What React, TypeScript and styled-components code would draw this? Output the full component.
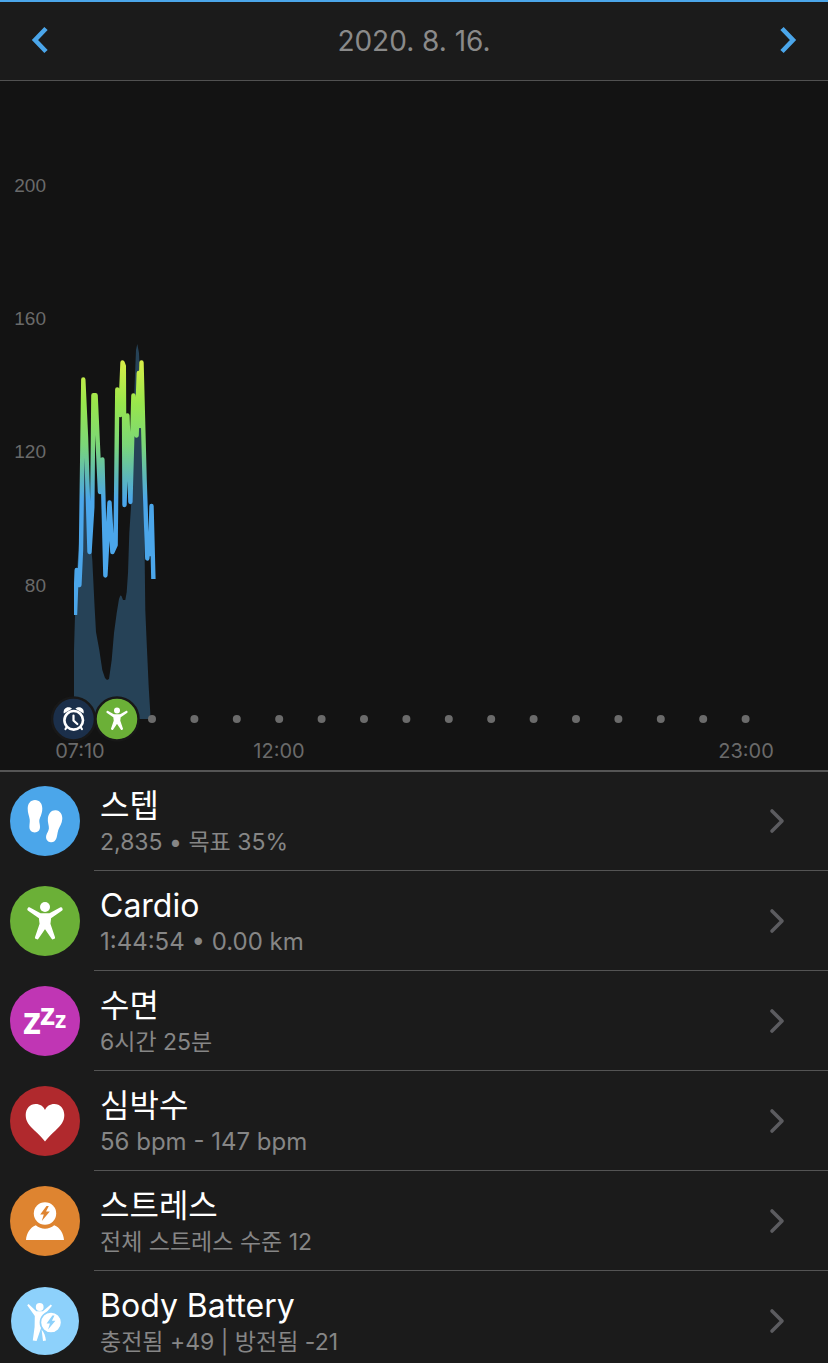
import React from "react";
import styled, { createGlobalStyle } from "styled-components";

const GlobalStyle = createGlobalStyle`
  * { box-sizing: border-box; }
  body {
    margin: 0;
    background: #1b1b1b;
    font-family: Inter, "Noto Sans CJK KR", sans-serif;
  }
`;

const Page = styled.div`
  display: flex;
  flex-direction: column;
  background: #1b1b1b;
`;

const Header = styled.header`
  display: flex;
  align-items: center;
  justify-content: space-between;
  height: 81px;
  padding: 0 20px;
  border-top: 2px solid #4ba6ea;
  border-bottom: 1px solid #515151;
`;

const DateTitle = styled.h1`
  margin: 0;
  color: #8a8a8a;
  font-size: 28px;
  font-weight: 400;
  line-height: 40px;
`;

const NavButton = styled.button`
  display: flex;
  padding: 0;
  border: 0;
  background: none;
  cursor: pointer;
`;

const ChartPanel = styled.section`
  background: #131313;
`;

const Chart = styled.svg`
  display: block;
  width: 100%;
  height: auto;
`;

const AxisLabel = styled.text`
  fill: #6a6a6a;
  font-family: "Liberation Sans", sans-serif;
  font-size: 19px;
  text-anchor: end;
`;

const TimeLabel = styled.text`
  fill: #6a6a6a;
  font-size: 20px;
  text-anchor: middle;
`;

const List = styled.ul`
  margin: 0;
  padding: 0;
  border-top: 2px solid #555555;
  list-style: none;
`;

const RowBody = styled.span`
  display: flex;
  flex: 1;
  align-items: center;
  justify-content: space-between;
  min-width: 0;
  padding: 15px 39px 12px 6px;
  border-top: 1px solid #545454;
`;

const RowLink = styled.a`
  display: flex;
  color: inherit;
  text-decoration: none;
`;

const Item = styled.li`
  &:first-child ${RowBody} {
    padding-top: 14px;
    border-top: 0;
  }
  &:first-child svg:first-child {
    margin-top: 14px;
  }
  &:last-child ${RowBody} {
    padding-bottom: 5px;
  }
`;

const Badge = styled.svg`
  flex: none;
  width: 70px;
  height: 70px;
  margin: 16px 14px 0 10px;
`;

const RowText = styled.span`
  display: flex;
  flex-direction: column;
`;

const Title = styled.span`
  color: #ffffff;
  font-size: 32px;
  line-height: 40px;
`;

const Detail = styled.span<{ $latin?: boolean }>`
  color: #868686;
  font-size: ${({ $latin }) => ($latin ? 24 : 23)}px;
  line-height: 32px;
`;

const Arrow = styled.svg`
  flex: none;
  width: 24px;
  height: 28px;
`;

const Zed = styled.text`
  fill: #ffffff;
  font-family: "Open Sans", sans-serif;
  font-weight: 700;
`;

const Figure = () => (
  <>
    <circle cx="35" cy="21" r="5" fill="#fff" />
    <path
      d="M18.9 22.4 L30 28.4 H40 L51.1 22.4 L51.5 23.4 L40 31.4 L39.2 38 L43.9 51.6 L42.6 52.2 L36.4 43 L35 41 L33.6 43 L27.4 52.2 L26.1 51.6 L30.8 38 L30 31.4 L18.5 23.4 Z"
      fill="#fff"
      stroke="#fff"
      strokeWidth="2.4"
      strokeLinejoin="round"
    />
  </>
);

const BOLT = "M1.5 -7.5 L-4.8 1 H-1.2 L-3.2 7.5 L4.8 -2 H1 L3.8 -7.5 Z";

const StepsIcon = () => (
  <g fill="#fff">
    <path d="M25 14 C29.5 14 32.3 17.5 32.3 22.5 C32.3 28.5 29.3 32 29.3 35 C29.3 37 30 38.5 30 41 C30 44.5 27.8 46.4 24.8 46.4 C21.5 46.4 19.4 44.2 19.4 41 C19.4 38 20 36 19.7 33.5 C19.2 29.5 17.6 27 17.7 22.5 C17.8 17.5 20.6 14 25 14 Z" />
    <path d="M45.8 24.2 C50 24.6 52.6 28.2 52.3 33 C52 37.5 49.5 40.5 48.3 44 C47.3 47 47.4 49.5 46.5 52 C45.4 55.3 42.8 57 39.8 56.1 C36.7 55.2 35.5 52.5 36.3 49.3 C37 46.8 38.6 45 38.9 42.5 C39.2 39.5 37.3 36.5 37.9 32 C38.5 27.3 41.5 23.8 45.8 24.2 Z" />
  </g>
);

const SleepIcon = () => (
  <>
    <Zed x="13" y="48" fontSize="37">z</Zed>
    <Zed x="30" y="39" fontSize="31">z</Zed>
    <Zed x="45" y="42" fontSize="23">z</Zed>
  </>
);

const HeartIcon = () => (
  <path
    d="M35 55.6 C33 52.5 29 48.8 24.5 44.5 C19 39.2 15.7 35.5 15.7 29 C15.7 22.5 20 18 25.7 18 C30 18 33.5 20.3 35 24 C36.5 20.3 40 18 44.3 18 C50 18 54.3 22.5 54.3 29 C54.3 35.5 51 39.2 45.5 44.5 C41 48.8 37 52.5 35 55.6 Z"
    fill="#fff"
  />
);

const StressIcon = () => (
  <>
    <circle cx="35" cy="27.5" r="11.2" fill="#fff" />
    <path d={BOLT} transform="translate(35 27.5)" fill="#de8430" />
    <path d="M16 54 C16.5 47.5 20 41.5 25.8 39.3 C31 43.9 39 43.9 44.2 39.3 C50 41.5 53.5 47.5 54 54 Z" fill="#fff" />
  </>
);

const BatteryIcon = () => (
  <>
    <circle cx="29.7" cy="21" r="3.9" fill="#fff" />
    <path
      d="M17.2 19.2 L18.6 17.9 L26.3 25.2 H32.8 L40.8 18.4 L42 19.8 L34.3 29 L32.8 42 L31.2 41.5 L26.6 55 L22.8 54.4 L24.6 41 L24.8 30 Z"
      fill="#fff"
    />
    <path d="M31.6 43.5 C34.2 46.5 35.4 50.5 36 54.4 L33 55 Z" fill="#fff" />
    <circle cx="41" cy="36.5" r="10.6" fill="#fff" stroke="#8dd1fb" strokeWidth="1.6" />
    <path d={BOLT} transform="translate(41 36.5) scale(0.92)" fill="#8dd1fb" />
  </>
);

const AXIS = [
  { label: "200", y: 192 },
  { label: "160", y: 325 },
  { label: "120", y: 458 },
  { label: "80", y: 592 },
];

const TIMES = [
  { label: "07:10", x: 80 },
  { label: "12:00", x: 279 },
  { label: "23:00", x: 746 },
];

const HOUR_DOTS = Array.from({ length: 15 }, (_, i) => 152 + i * 42.4);

const AREA =
  "M74 719 V650 L75 615 L77 570 L80 530 L82 450 L84 405 L86 430 L89 480 L91 545 L92.3 560 L94.5 605 L96 632 L99.3 650 L102.3 670 L105 678 L107 680 L109 679 L111.7 660 L114 633 L116.7 613 L119 599 L120.3 595.5 L121.5 596 L123 600 L125.3 600 L126.7 592 L128 573 L129.3 533 L131 507 L134 400 L136 350 L137.3 344 L139 353 L141 400 L143.5 480 L144.7 560 L145.3 610 L146.7 643 L148.7 687 L150.3 713 V719 Z";

const HEART_LINE =
  "M75 615 L76.7 570 L79.4 585 L81 550 L83.3 379.5 L86 437 L89.5 552 L92.3 507 L93.4 395.3 H95.6 L100 492 L102.4 459.5 L105.4 575.5 L109.5 502.5 L112.4 552 L115.6 545 L117.3 389.5 L120.3 415 L122.5 362.5 L123.8 366 L124.5 505 L127.4 415.5 L130.4 502 L133.4 395.5 L136.6 435.5 L138.8 373 L140 426 L141.5 362.5 L144.6 480 L147.3 558.5 L148.7 541 L150.2 554 L151.5 506 L153.4 579";

const DayChart = () => (
  <Chart viewBox="0 81 828 689" role="img" aria-label="심박수">
    <defs>
      <linearGradient id="zone" gradientUnits="userSpaceOnUse" x1="0" y1="362" x2="0" y2="500">
        <stop offset="0" stopColor="#d6ed48" />
        <stop offset="0.3" stopColor="#98e64c" />
        <stop offset="0.6" stopColor="#7bd678" />
        <stop offset="0.85" stopColor="#5ab5be" />
        <stop offset="1" stopColor="#4ba6ea" />
      </linearGradient>
      <clipPath id="plot">
        <rect x="74" y="81" width="754" height="638" />
      </clipPath>
    </defs>
    {AXIS.map((a) => (
      <AxisLabel key={a.label} x="46" y={a.y}>{a.label}</AxisLabel>
    ))}
    <g clipPath="url(#plot)">
      <path d={AREA} fill="#264257" />
      <path d={HEART_LINE} fill="none" stroke="url(#zone)" strokeWidth="4.4" strokeLinejoin="round" />
    </g>
    {HOUR_DOTS.map((x) => (
      <circle key={x} cx={x} cy="719" r="4" fill="#6b6b6b" />
    ))}
    <circle cx="73.5" cy="719" r="21.5" fill="#1b2f4a" stroke="#181818" strokeWidth="2.5" />
    <g fill="none" stroke="#fff" strokeLinecap="round">
      <circle cx="73.7" cy="720.3" r="9.3" strokeWidth="2.6" />
      <path d="M73.5 715.5 V720.5 L77.3 724" strokeWidth="2.2" />
      <path d="M66.5 727.5 L65.5 729 M80.9 727.5 L81.9 729" strokeWidth="2.2" />
    </g>
    <path d="M63.8 713.5 C62.6 708 68.3 705.4 72 708.7 Z M83.6 713.5 C84.8 708 79.1 705.4 75.4 708.7 Z" fill="#fff" />
    <circle cx="117" cy="719" r="21.5" fill="#6bb037" stroke="#181818" strokeWidth="2.5" />
    <g transform="translate(96 698) scale(0.6)">
      <Figure />
    </g>
    {TIMES.map((t) => (
      <TimeLabel key={t.label} x={t.x} y="758">{t.label}</TimeLabel>
    ))}
  </Chart>
);

interface Metric {
  id: string;
  title: string;
  detail: string;
  color: string;
  latin?: boolean;
  radius?: number;
  Icon: React.FC;
}

const METRICS: Metric[] = [
  { id: "steps", title: "스텝", detail: "2,835 • 목표 35%", color: "#4ba6ea", Icon: StepsIcon },
  { id: "cardio", title: "Cardio", detail: "1:44:54 • 0.00 km", color: "#6bb037", latin: true, Icon: Figure },
  { id: "sleep", title: "수면", detail: "6시간 25분", color: "#c036b4", Icon: SleepIcon },
  { id: "heart-rate", title: "심박수", detail: "56 bpm - 147 bpm", color: "#b0292d", latin: true, Icon: HeartIcon },
  { id: "stress", title: "스트레스", detail: "전체 스트레스 수준 12", color: "#de8430", Icon: StressIcon },
  { id: "body-battery", title: "Body Battery", detail: "충전됨 +49 | 방전됨 -21", color: "#8dd1fb", radius: 34, Icon: BatteryIcon },
];

export default function App() {
  return (
    <Page>
      <GlobalStyle />
      <Header>
        <NavButton type="button" aria-label="이전 날짜">
          <svg width="40" height="40" viewBox="0 0 40 40" fill="none" stroke="#4ba6ea" strokeWidth="4.6">
            <path d="M26 7.5 L15 19 L26 30.5" />
          </svg>
        </NavButton>
        <DateTitle>2020. 8. 16.</DateTitle>
        <NavButton type="button" aria-label="다음 날짜">
          <svg width="40" height="40" viewBox="0 0 40 40" fill="none" stroke="#4ba6ea" strokeWidth="4.6">
            <path d="M14 7.5 L25 19 L14 30.5" />
          </svg>
        </NavButton>
      </Header>
      <ChartPanel>
        <DayChart />
      </ChartPanel>
      <List>
        {METRICS.map(({ id, title, detail, color, latin, radius = 35, Icon }) => (
          <Item key={id}>
            <RowLink href={`#${id}`}>
              <Badge viewBox="0 0 70 70" aria-hidden="true">
                <circle cx="35" cy="35" r={radius} fill={color} />
                <Icon />
              </Badge>
              <RowBody>
                <RowText>
                  <Title>{title}</Title>
                  <Detail $latin={latin}>{detail}</Detail>
                </RowText>
                <Arrow viewBox="0 0 24 28" fill="none" stroke="#5c5c60" strokeWidth="3.6" strokeLinecap="round" strokeLinejoin="round" aria-hidden="true">
                  <path d="M7 3 L17 13 L7 23" />
                </Arrow>
              </RowBody>
            </RowLink>
          </Item>
        ))}
      </List>
    </Page>
  );
}
